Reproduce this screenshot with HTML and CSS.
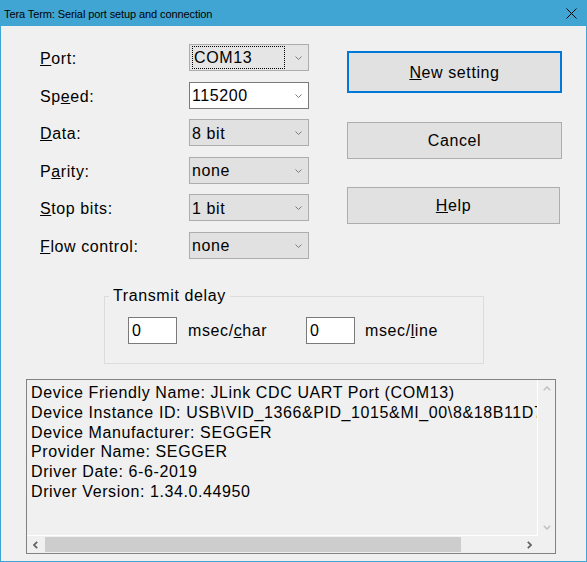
FILE: index.html
```html
<!DOCTYPE html>
<html>
<head>
<meta charset="utf-8">
<link rel="stylesheet" href="styles.css">
</head>
<body>
<div class="window">
  <div class="titlebar">
    <span class="title">Tera Term: Serial port setup and connection</span>
    <svg class="close" width="11" height="11" viewBox="0 0 11 11"><path d="M0.5 0.5 L10.5 10.5 M10.5 0.5 L0.5 10.5" stroke="#000" stroke-width="1" fill="none"/></svg>
  </div>
  <div class="client">
    <div class="top">
      <div class="fields">
        <div class="lbl"><u>P</u>ort:</div>
        <div class="combo combo-focus"><span class="val focus">COM13</span><svg class="chev" width="7" height="4" viewBox="0 0 7 4"><polyline points="0.5,0.5 3.5,3.5 6.5,0.5" fill="none" stroke="#7a7a7a" stroke-width="1"/></svg></div>
        <div class="lbl">Sp<u>e</u>ed:</div>
        <div class="combo combo-edit"><span class="val">115200</span><svg class="chev" width="7" height="4" viewBox="0 0 7 4"><polyline points="0.5,0.5 3.5,3.5 6.5,0.5" fill="none" stroke="#7a7a7a" stroke-width="1"/></svg></div>
        <div class="lbl"><u>D</u>ata:</div>
        <div class="combo"><span class="val">8 bit</span><svg class="chev" width="7" height="4" viewBox="0 0 7 4"><polyline points="0.5,0.5 3.5,3.5 6.5,0.5" fill="none" stroke="#7a7a7a" stroke-width="1"/></svg></div>
        <div class="lbl">P<u>a</u>rity:</div>
        <div class="combo"><span class="val">none</span><svg class="chev" width="7" height="4" viewBox="0 0 7 4"><polyline points="0.5,0.5 3.5,3.5 6.5,0.5" fill="none" stroke="#7a7a7a" stroke-width="1"/></svg></div>
        <div class="lbl"><u>S</u>top bits:</div>
        <div class="combo"><span class="val">1 bit</span><svg class="chev" width="7" height="4" viewBox="0 0 7 4"><polyline points="0.5,0.5 3.5,3.5 6.5,0.5" fill="none" stroke="#7a7a7a" stroke-width="1"/></svg></div>
        <div class="lbl"><u>F</u>low control:</div>
        <div class="combo"><span class="val">none</span><svg class="chev" width="7" height="4" viewBox="0 0 7 4"><polyline points="0.5,0.5 3.5,3.5 6.5,0.5" fill="none" stroke="#7a7a7a" stroke-width="1"/></svg></div>
      </div>
      <div class="buttons">
        <div class="btn btn-default"><span><u>N</u>ew setting</span></div>
        <div class="btn btn-cancel"><span>Cancel</span></div>
        <div class="btn btn-help"><span><u>H</u>elp</span></div>
      </div>
    </div>
    <fieldset class="group">
      <legend>Transmit delay</legend>
      <div class="delay-row">
        <div class="edit">0</div>
        <span class="unit unit-char">msec/<u>c</u>har</span>
        <div class="edit">0</div>
        <span class="unit unit-line">msec/<u>l</u>ine</span>
      </div>
    </fieldset>
    <div class="infobox">
      <div class="info-text">
        <div>Device Friendly Name: JLink CDC UART Port (COM13)</div>
        <div>Device Instance ID: USB\VID_1366&amp;PID_1015&amp;MI_00\8&amp;18B11D73&amp;0&amp;0000</div>
        <div>Device Manufacturer: SEGGER</div>
        <div>Provider Name: SEGGER</div>
        <div>Driver Date: 6-6-2019</div>
        <div>Driver Version: 1.34.0.44950</div>
      </div>
      <div class="vscroll">
        <div class="sarrow"><svg width="8" height="5" viewBox="0 0 8 5"><polyline points="0.8,4.2 4,1 7.2,4.2" fill="none" stroke="#c2c2c2" stroke-width="1.6"/></svg></div>
        <div class="sarrow"><svg width="8" height="5" viewBox="0 0 8 5"><polyline points="0.8,0.8 4,4 7.2,0.8" fill="none" stroke="#c2c2c2" stroke-width="1.6"/></svg></div>
      </div>
      <div class="hscroll">
        <div class="harrow"><svg width="5" height="8" viewBox="0 0 5 8"><polyline points="4.2,0.8 1,4 4.2,7.2" fill="none" stroke="#606060" stroke-width="1.7"/></svg></div>
        <div class="htrack"><div class="thumb"></div></div>
        <div class="harrow"><svg width="5" height="8" viewBox="0 0 5 8"><polyline points="0.8,0.8 4,4 0.8,7.2" fill="none" stroke="#606060" stroke-width="1.7"/></svg></div>
      </div>
      <div class="corner"></div>
    </div>
  </div>
</div>
</body>
</html>
```
FILE: styles.css
```css
html, body {
  margin: 0;
  padding: 0;
  background: #f0f0f0;
}
.window {
  width: 587px;
  height: 562px;
  box-sizing: border-box;
  border: 1px solid #40a5d3;
  border-top: none;
  background: #f0f0f0;
  font-family: "Liberation Sans", Arial, sans-serif;
  font-size: 16px;
  letter-spacing: 0.6px;
  color: #000;
  overflow: hidden;
}
.titlebar {
  height: 26px;
  background: #40a5d3;
  display: flex;
  align-items: center;
  justify-content: space-between;
  margin: 0 -1px;
  padding: 0 10px 0 4px;
}
.title {
  font-family: "Liberation Sans", Arial, sans-serif;
  font-size: 11px;
  letter-spacing: -0.1px;
  color: #000;
  padding-top: 1px;
}
.close {
  display: block;
  margin-top: 1px;
}
.client {
  padding-top: 18px;
}
.top {
  display: flex;
  margin-left: 39px;
}
.fields {
  display: grid;
  grid-template-columns: 149px 120px;
  grid-auto-rows: 27px;
  row-gap: 10.5px;
  align-items: center;
}
.lbl {
  padding-top: 3px;
  line-height: 18px;
}
.combo {
  box-sizing: border-box;
  height: 27px;
  border: 1px solid #adadad;
  background: #e1e1e1;
  display: flex;
  align-items: center;
  padding: 2px 6px 2px 2px;
}
.combo-focus {
  background: #e5e5e5;
}
.combo-edit {
  background: #fff;
  border-color: #7a7a7a;
}
.val {
  flex: 1;
  line-height: 21px;
  padding-top: 1px;
}
.focus {
  border: 1px dotted #000;
  padding-left: 1px;
  padding-top: 0;
  margin-right: 10px;
}
.chev {
  display: block;
  margin-top: 1px;
}
.buttons {
  margin-left: 38px;
  margin-top: 7px;
  display: flex;
  flex-direction: column;
}
.btn {
  box-sizing: border-box;
  width: 215px;
  height: 37px;
  border: 1px solid #adadad;
  background: #e1e1e1;
  display: flex;
  align-items: center;
  justify-content: center;
  padding-top: 1px;
}
.btn-default {
  height: 42px;
  border: 2px solid #0078d7;
}
.btn-cancel {
  margin-top: 29px;
}
.btn-help {
  margin-top: 28px;
  width: 213px;
}
.group {
  box-sizing: border-box;
  width: 380px;
  margin: 28.5px 0 0 103px;
  padding: 0 0 19px 0;
  border: 1px solid #dcdcdc;
  min-inline-size: 0;
}
.group legend {
  margin-left: 4px;
  padding: 0 4px;
  line-height: 18px;
}
.delay-row {
  display: flex;
  align-items: center;
  margin: 12px 0 0 23px;
}
.edit {
  box-sizing: border-box;
  width: 49px;
  height: 27px;
  border: 1px solid #7a7a7a;
  background: #fff;
  padding-left: 3px;
  line-height: 25px;
}
.unit-char {
  margin-left: 11px;
  width: 118px;
}
.unit-line {
  margin-left: 10px;
}
.infobox {
  box-sizing: border-box;
  width: 530px;
  height: 175px;
  margin: 15px 0 0 25px;
  border: 1px solid #828282;
  display: grid;
  grid-template-columns: 511px 17px;
  grid-template-rows: 156px 17px;
}
.info-text {
  box-sizing: border-box;
  border-right: 1px solid #fff;
  border-bottom: 1px solid #fff;
  padding: 3px 0 0 4px;
  overflow: hidden;
  white-space: nowrap;
  line-height: 19.8px;
}
.vscroll {
  display: flex;
  flex-direction: column;
  justify-content: space-between;
}
.sarrow {
  height: 17px;
  display: flex;
  align-items: center;
  justify-content: center;
}
.sarrow svg {
  display: block;
  margin-left: 1px;
}
.hscroll {
  display: flex;
  align-items: stretch;
}
.harrow {
  width: 17px;
  display: flex;
  align-items: center;
  justify-content: center;
}
.harrow svg {
  display: block;
}
.htrack {
  flex: 1;
  display: flex;
  align-items: center;
}
.thumb {
  width: 416px;
  height: 15px;
  margin-left: 1px;
  background: #cdcdcd;
}
.corner {
  background: #f0f0f0;
}
```
